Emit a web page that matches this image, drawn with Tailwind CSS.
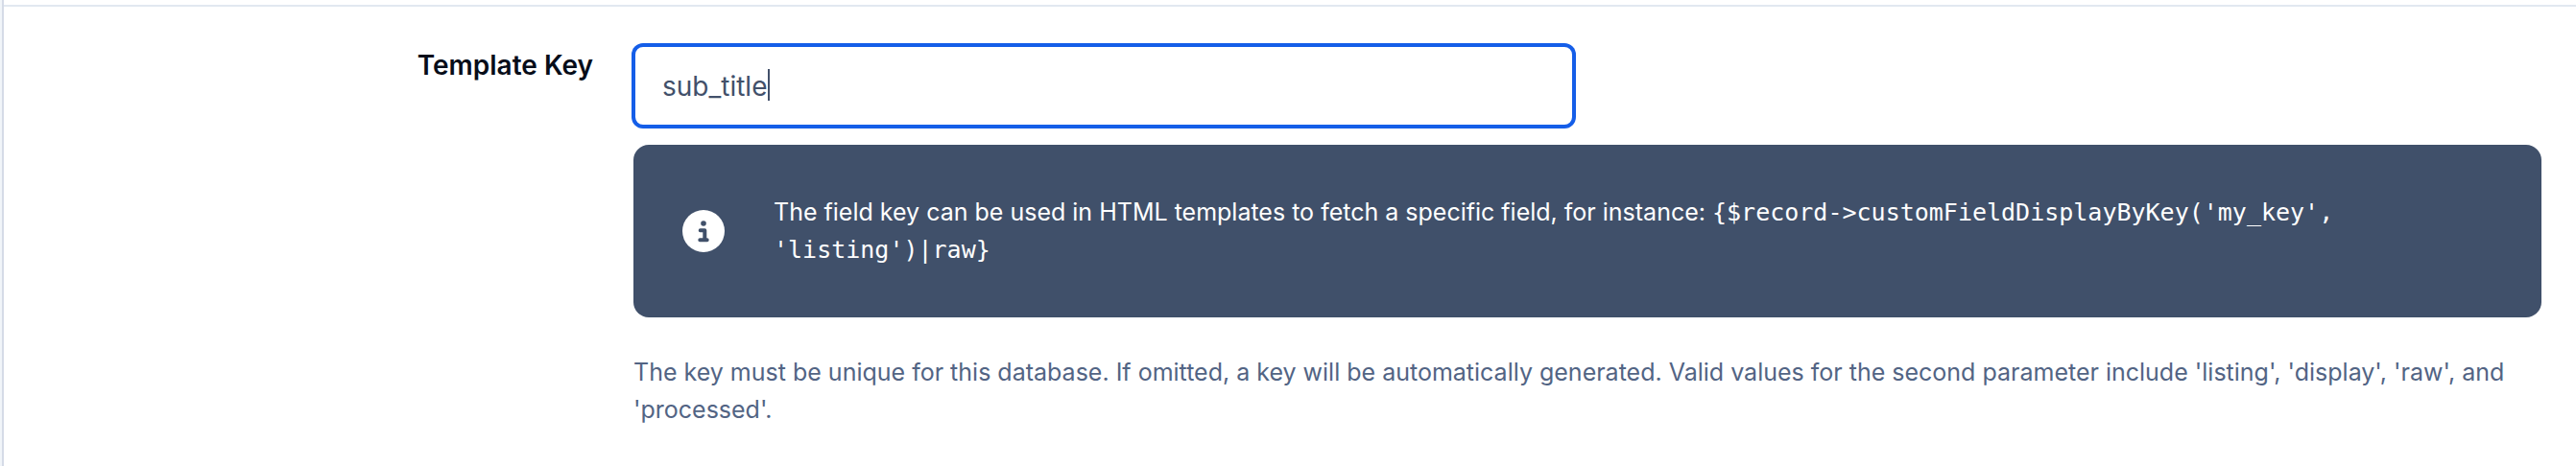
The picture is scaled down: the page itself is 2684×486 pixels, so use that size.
<!doctype html>
<html lang="en">

<head>
    <meta charset="UTF-8" />
    <meta name="viewport" content="width=device-width, initial-scale=1.0" />
    <title>Template Key</title>
    <script src="https://cdn.jsdelivr.net/npm/@tailwindcss/browser@4"></script>
</head>

<body class="bg-[#f1f5f9]">
    <main class="ml-[2px] min-h-screen border-l-2 border-[#d5dbe7] bg-white pt-[5px] font-[Inter,sans-serif]">
        <div class="grid grid-cols-[614fr_1988fr] gap-x-[42px] border-t-2 border-[#e2e8f0] pt-10 pr-9">
            <label for="template-key" class="text-right text-[28px] leading-[42px] font-semibold text-[#070d19]">Template Key</label>
            <div>
                <div class="relative max-w-[980px]">
                    <input id="template-key" type="text" value="sub_title"
                        class="block h-[85px] w-full rounded-[10px] border-2 border-[#155ee8] bg-white px-7 text-[28px] text-[#42506a] shadow-sm ring-2 ring-[#155ee8] outline-none" />
                    <!-- text cursor -->
                    <span class="absolute top-[25px] left-[140px] h-[33px] w-[2px] bg-[#42506a]"></span>
                </div>

                <div class="mt-[19px] flex items-center gap-[51px] rounded-2xl bg-[#40506a] px-[51px] py-[51px] text-white">
                    <svg xmlns="http://www.w3.org/2000/svg" viewBox="0 0 44 44" class="size-11 shrink-0">
                        <circle cx="22" cy="22" r="22" fill="currentColor" />
                        <circle cx="22" cy="14" r="2.8" fill="#40506a" />
                        <path d="M18.7 21.3H23.3V31.3M18.3 31.3H25.7" fill="none" stroke="#40506a" stroke-width="4"
                            stroke-linecap="round" stroke-linejoin="round" />
                    </svg>
                    <p class="text-[25px] leading-[39px]">
                        The field key can be used in HTML templates to fetch a specific field, for instance:
                        <code class="font-['DejaVu_Sans_Mono',monospace] text-[25px]">{$record-&gt;customFieldDisplayByKey('my_key', 'listing')|raw}</code>
                    </p>
                </div>

                <p class="mt-[38px] text-[25px] leading-[39px] text-[#526484]">
                    The key must be unique for this database. If omitted, a key will be automatically generated. Valid values for the second parameter include 'listing', 'display', 'raw', and 'processed'.
                </p>
            </div>
        </div>
    </main>
</body>

</html>
